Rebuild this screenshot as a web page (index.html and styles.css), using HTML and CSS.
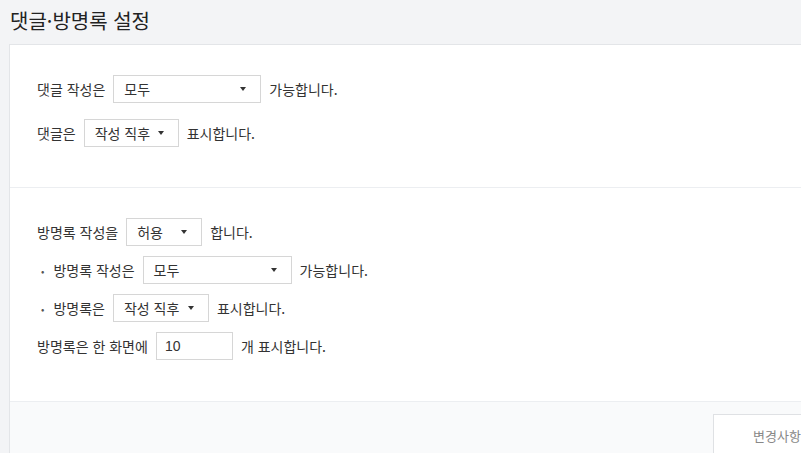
FILE: index.html
```html
<!DOCTYPE html>
<html lang="ko">
<head>
<meta charset="utf-8">
<link rel="stylesheet" href="styles.css">
</head>
<body>
<div class="page">
  <h1 class="title">댓글·방명록 설정</h1>
  <div class="card">
    <div class="section s1">
      <div class="row">
        <span>댓글 작성은</span>
        <div class="select w148"><span>모두</span><i class="arrow"></i></div>
        <span>가능합니다.</span>
      </div>
      <div class="row">
        <span>댓글은</span>
        <div class="select w95"><span>작성 직후</span><i class="arrow"></i></div>
        <span>표시합니다.</span>
      </div>
    </div>
    <div class="section s2">
      <div class="row">
        <span>방명록 작성을</span>
        <div class="select w76"><span>허용</span><i class="arrow"></i></div>
        <span>합니다.</span>
      </div>
      <div class="row sub">
        <span class="dot">•</span>
        <span>방명록 작성은</span>
        <div class="select w149"><span>모두</span><i class="arrow"></i></div>
        <span>가능합니다.</span>
      </div>
      <div class="row sub">
        <span class="dot">•</span>
        <span>방명록은</span>
        <div class="select w96"><span>작성 직후</span><i class="arrow"></i></div>
        <span>표시합니다.</span>
      </div>
      <div class="row">
        <span>방명록은 한 화면에</span>
        <div class="input">10</div>
        <span>개 표시합니다.</span>
      </div>
    </div>
    <div class="footer">
      <button class="save">변경사항 저장</button>
    </div>
  </div>
</div>
</body>
</html>
```
FILE: styles.css
```css
html, body {
  margin: 0;
  padding: 0;
  background: #f3f4f6;
  font-family: "Noto Sans CJK KR", "Noto Sans", sans-serif;
  color: #333;
  overflow: hidden;
}
.page {
  width: 801px;
  height: 453px;
  padding-left: 9px;
  box-sizing: border-box;
  overflow: hidden;
}
.title {
  margin: 0;
  height: 44px;
  line-height: 41px;
  font-size: 20px;
  font-weight: 400;
  color: #222;
  padding-left: 1px;
  white-space: nowrap;
}
.card {
  width: 820px;
  background: #fff;
  border: 1px solid #e3e5e8;
  border-right: none;
}
.section {
  display: flex;
  flex-direction: column;
  padding: 30px 0 41px 27px;
  font-size: 14px;
}
.s1 { gap: 16px; padding-bottom: 40px; }
.s2 { gap: 10px; border-top: 1px solid #eceef1; }
.row {
  display: flex;
  align-items: center;
  gap: 8px;
  height: 28px;
  white-space: nowrap;
}
.row.sub { padding-left: 4px; }
.dot {
  font-size: 10px;
  margin-right: 1px;
  color: #555;
}
.select, .input {
  box-sizing: border-box;
  height: 28px;
  border: 1px solid #d6d6d6;
  background: #fff;
  display: flex;
  align-items: center;
  justify-content: space-between;
  padding: 0 14px 0 10px;
  color: #333;
}
.arrow {
  width: 0;
  height: 0;
  border-left: 3.5px solid transparent;
  border-right: 3.5px solid transparent;
  border-top: 4px solid #333;
}
.w148 { width: 148px; }
.w149 { width: 149px; }
.w95 { width: 95px; }
.w96 { width: 96px; }
.w76 { width: 76px; }
.input {
  width: 77px;
  padding-left: 8px;
  font-family: "Liberation Sans", sans-serif;
  font-size: 14px;
}
.footer {
  background: #f9fafb;
  border-top: 1px solid #eceef1;
  height: 60px;
  padding: 12px 0 0 703px;
}
.save {
  background: #fff;
  border: 1px solid #dfe1e4;
  height: 42px;
  width: 140px;
  padding: 0 0 0 39px;
  text-align: left;
  font-family: inherit;
  font-size: 13px;
  color: #888;
  white-space: nowrap;
}
```
